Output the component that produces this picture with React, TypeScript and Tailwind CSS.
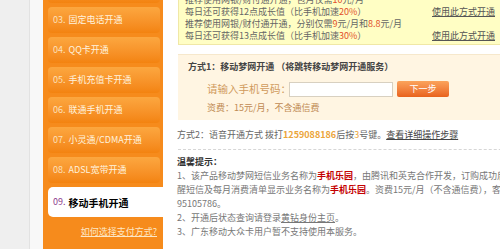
import React from "react";

const font = { fontFamily: '"Noto Sans CJK SC", "Noto Sans", sans-serif' };

const menu = [
  ["03.", "固定电话开通"],
  ["04.", "QQ卡开通"],
  ["05.", "手机充值卡开通"],
  ["06.", "联通手机开通"],
  ["07.", "小灵通/CDMA开通"],
  ["08.", "ADSL宽带开通"],
];

const itemBg = "rounded-[4px] bg-linear-to-b from-[#fca73f] to-[#f3830f]";

const Sidebar: React.FC = () => (
  <div className="w-[120px] shrink-0 bg-[#f68b1c] pl-[5px] flex flex-col">
    <div className="mt-[-23px] flex flex-col gap-[4px] pr-[3px]">
      {/* item scrolled above the top edge */}
      <div className={`h-[26px] ${itemBg}`} />
      {menu.map(([num, label]) => (
        <div
          key={num}
          className={`h-[26px] ${itemBg} flex items-center pl-[5px] text-[9px] text-[#fff3df] whitespace-nowrap`}
        >
          <span className="text-[#fde0bb] mr-[3px]">{num}</span>
          {label}
        </div>
      ))}
    </div>
    <div className="mt-[4px] h-[30px] rounded-l-[5px] bg-white flex items-center pl-[5px] whitespace-nowrap">
      <span className="text-[9px] text-[#8b3a8b] mr-[3px]">09.</span>
      <span className="text-[10px] font-bold text-black">移动手机开通</span>
    </div>
    <div className="mt-[8px] pr-[6px] text-right text-[9px] text-[#fde7c6] underline whitespace-nowrap">
      如何选择支付方式?
    </div>
  </div>
);

const Red: React.FC<{ children: React.ReactNode }> = ({ children }) => (
  <span className="text-[#e2502a]">{children}</span>
);

const App: React.FC = () => {
  return (
    <div className="w-[500px] h-[249px] overflow-hidden flex bg-white" style={font}>
      <div className="w-[30px] shrink-0 bg-[#efefef] border-r border-[#e2e2e2]" />
      <div className="w-[13px] shrink-0 bg-[#f8f8f8]" />
      <Sidebar />
      <div className="w-[14px] shrink-0" />

      <div className="w-[420px] shrink-0 flex flex-col text-[9px] text-[#666]">
        {/* yellow box */}
        <div className="mt-[-10px] ml-[1px] bg-[#fffec4] border border-[#f0e8a6] pt-[3px] pb-[2px] pl-[6px] leading-[12px]">
          <div className="whitespace-nowrap">推荐使用网银/财付通开通，包月仅需<Red>10</Red>元/月</div>
          <div className="flex whitespace-nowrap">
            <div className="w-[247px]">每日还可获得12点成长值（比手机加速<Red>20%</Red>）</div>
            <span className="underline text-[#555]">使用此方式开通</span>
          </div>
          <div className="whitespace-nowrap">
            推荐使用网银/财付通开通，分别仅需<Red>9</Red>元/月和<Red>8.8</Red>元/月
          </div>
          <div className="flex whitespace-nowrap">
            <div className="w-[247px]">每日还可获得13点成长值（比手机加速<Red>30%</Red>）</div>
            <span className="underline text-[#555]">使用此方式开通</span>
          </div>
        </div>

        {/* method 1 */}
        <div className="mt-[9px] ml-[1px] bg-[#fff5e2] border-t border-[#f6e8cc] pt-[6px] pb-[6px] pl-[10px]">
          <div className="leading-[12px] font-bold text-[#444] whitespace-nowrap">
            方式1：移动梦网开通 （将跳转移动梦网开通服务）
          </div>
          <div className="mt-[8px] ml-[19px] flex items-center h-[16px]">
            <span className="w-[82px] text-[10.5px] text-[#d09a5c] whitespace-nowrap">请输入手机号码：</span>
            <div className="w-[104px] h-[15px] bg-white border border-[#d8d0c0]" />
            <button className="ml-[4px] w-[52px] h-[16px] rounded-[2px] bg-linear-to-b from-[#fba35c] to-[#e8621b] text-white text-[9px] leading-[16px]">
              下一步
            </button>
          </div>
          <div className="mt-[5px] ml-[19px] leading-[12px] text-[#c08a52] whitespace-nowrap">
            资费：15元/月，不含通信费
          </div>
        </div>

        {/* method 2 */}
        <div className="mt-[9px] leading-[12px] whitespace-nowrap">
          方式2：语音开通方式 拨打<b className="text-[#eba53a]">1259088186</b>后按
          <span className="text-[#eba53a]">3</span>号键。
          <span className="underline text-[#444]">查看详细操作步骤</span>
        </div>

        <div className="mt-[8px] ml-[1px] border-t border-dashed border-[#d6d6d6]" />

        <div className="mt-[6px] leading-[12px] font-bold text-[#333]">温馨提示：</div>

        <div className="mt-[1px] leading-[14px] text-[#777] whitespace-nowrap">
          <div>
            1、该产品移动梦网短信业务名称为<b className="text-[#c40000]">手机乐园</b>，由腾讯和英克合作开发，订购成功后会收到提
          </div>
          <div>
            醒短信及每月消费清单显示业务名称为<b className="text-[#c40000]">手机乐园</b>。资费15元/月（不含通信费），客服电话：
          </div>
          <div>95105786。</div>
          <div>
            2、开通后状态查询请登录<span className="underline">黄钻身份主页</span>。
          </div>
          <div>3、广东移动大众卡用户暂不支持使用本服务。</div>
        </div>
      </div>
    </div>
  );
};

export default App;
